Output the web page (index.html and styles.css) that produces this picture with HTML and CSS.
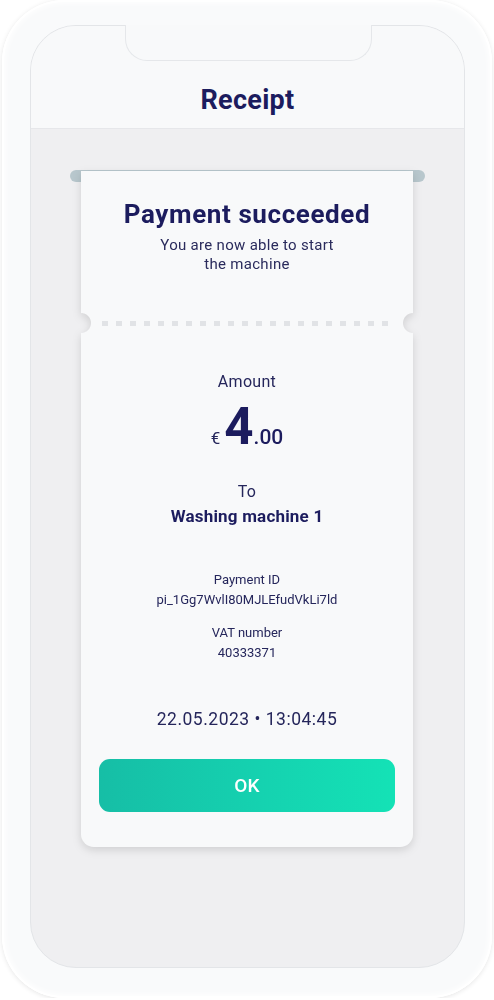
FILE: index.html
```html
<!DOCTYPE html>
<html lang="en">
<head>
<meta charset="utf-8">
<title>Receipt</title>
<link rel="stylesheet" href="styles.css">
</head>
<body>
<div class="phone">
  <div class="notch"></div>
  <div class="screen">
    <header class="app-header"><h1 class="app-title">Receipt</h1></header>
    <main class="receipt-area">
      <div class="slot"></div>
      <div class="ticket">
        <section class="ticket-top">
          <h2 class="status-title">Payment succeeded</h2>
          <p class="status-text">You are now able to start<br>the machine</p>
        </section>
        <div class="perforation"><div class="dashes"></div></div>
        <section class="ticket-body">
          <div class="label">Amount</div>
          <div class="amount"><span class="currency">€</span><span class="whole">4</span><span class="cents">.00</span></div>
          <div class="label to-label">To</div>
          <div class="machine">Washing machine 1</div>
          <div class="meta meta-first">Payment ID<br>pi_1Gg7WvlI80MJLEfudVkLi7ld</div>
          <div class="meta meta-second">VAT number<br>40333371</div>
          <div class="datetime">22.05.2023 • 13:04:45</div>
          <button class="ok-btn">OK</button>
        </section>
      </div>
    </main>
  </div>
</div>
</body>
</html>
```
FILE: styles.css
```css
* { box-sizing: border-box; }
html, body { margin: 0; padding: 0; background: #ffffff; }
body {
  font-family: Roboto, "Liberation Sans", sans-serif;
  color: #25265b;
}
.phone {
  position: relative;
  width: 490px;
  height: 998px;
  margin-left: 2px;
  border-radius: 62px;
  background: #f9fafb;
  box-shadow: inset 0 0 0 2px #ffffff, inset 0 0 6px 3px #ffffff, 0 1px 5px rgba(0, 0, 0, 0.10);
  padding: 25px 27px 30px 28px;
}
.notch {
  position: absolute;
  left: 123px;
  top: 25px;
  width: 247px;
  height: 36px;
  background: #f8f9fa;
  border: 1px solid #e5e7ea;
  border-top: none;
  border-radius: 0 0 22px 22px;
  z-index: 3;
}
.screen {
  height: 100%;
  border: 1px solid #e3e5e8;
  border-radius: 46px;
  background: #efeff1;
  overflow: hidden;
  display: flex;
  flex-direction: column;
}
.app-header {
  height: 103px;
  background: #f8f9fa;
  border-bottom: 1px solid #e6e7ea;
  display: flex;
  align-items: flex-end;
  justify-content: center;
  padding-bottom: 12px;
}
.app-title {
  margin: 0;
  font-size: 27px;
  line-height: 32px;
  font-weight: 700;
  letter-spacing: 0.3px;
  color: #1c1c5e;
}
.receipt-area {
  display: flex;
  flex-direction: column;
  align-items: center;
  padding-top: 41px;
}
.slot {
  width: 355px;
  height: 12px;
  border-radius: 6px;
  background: #b8c7cd;
  margin-left: -1px;
}
.ticket {
  position: relative;
  z-index: 1;
  width: 332px;
  margin-top: -11px;
  margin-left: -1px;
  filter: drop-shadow(0 3px 4px rgba(0, 0, 0, 0.13));
}
.ticket-top {
  background: #f8f9fa;
  padding: 27px 10px 39px;
  text-align: center;
}
.status-title {
  margin: 0;
  font-size: 26px;
  line-height: 32px;
  font-weight: 700;
  letter-spacing: 0.6px;
  color: #1c1c5e;
}
.status-text {
  margin: 6px 0 0;
  font-size: 15px;
  line-height: 19px;
  letter-spacing: 0.3px;
  color: #2a2b5c;
}
.perforation {
  height: 20px;
  background:
    radial-gradient(circle at 0 50%, transparent 9.5px, #f8f9fa 10.5px) left / 50% 100% no-repeat,
    radial-gradient(circle at 100% 50%, transparent 9.5px, #f8f9fa 10.5px) right / 50% 100% no-repeat;
  display: flex;
  align-items: center;
  justify-content: center;
}
.dashes {
  width: 292px;
  height: 5px;
  margin-left: 2px;
  background: repeating-linear-gradient(to right, #e1e3e6 0 6px, transparent 6px 14px);
}
.ticket-body {
  background: #f8f9fa;
  border-radius: 0 0 13px 13px;
  padding: 39px 18px 35px;
  display: flex;
  flex-direction: column;
  align-items: center;
  text-align: center;
}
.label {
  font-size: 16px;
  line-height: 20px;
  letter-spacing: 0.3px;
  color: #25265b;
}
.amount {
  margin-top: 10px;
  display: flex;
  align-items: baseline;
  height: 50px;
  line-height: 50px;
  color: #1c1c5e;
}
.currency {
  font-size: 17px;
  margin-right: 4px;
  color: #25265b;
}
.whole {
  font-size: 51px;
  font-weight: 700;
}
.cents {
  font-size: 21px;
  font-weight: 500;
}
.to-label {
  margin-top: 30px;
}
.machine {
  margin-top: 3px;
  font-size: 17px;
  line-height: 22px;
  font-weight: 700;
  letter-spacing: 0.2px;
  color: #1c1c5e;
}
.meta {
  font-size: 13px;
  line-height: 20px;
  color: #25265b;
}
.meta-first { margin-top: 43px; }
.meta-second { margin-top: 13px; }
.datetime {
  margin-top: 45px;
  font-size: 17.5px;
  line-height: 22px;
  letter-spacing: 0.5px;
  color: #25265b;
}
.ok-btn {
  margin-top: 29px;
  width: 100%;
  height: 53px;
  border: none;
  border-radius: 11px;
  background: linear-gradient(90deg, #16bea6 0%, #15d2b0 55%, #14e2b6 100%);
  color: #ffffff;
  font-family: Roboto, "Liberation Sans", sans-serif;
  font-size: 19px;
  font-weight: 500;
  letter-spacing: 0.3px;
}
```
